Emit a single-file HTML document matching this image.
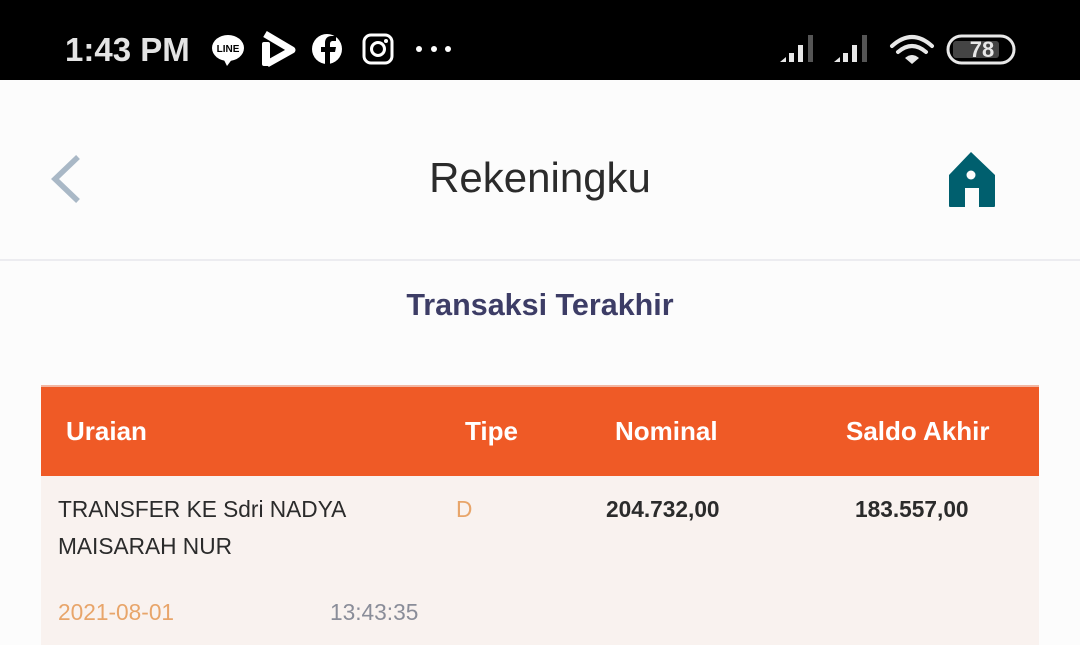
<!DOCTYPE html>
<html><head><meta charset="utf-8"><style>
*{margin:0;padding:0;box-sizing:border-box}
body{width:1080px;height:645px;overflow:hidden;background:#fcfcfc;font-family:"Liberation Sans",sans-serif;position:relative}
.a{position:absolute;white-space:nowrap}
</style></head><body>
<div class="a" style="left:0;top:0;width:1080px;height:80px;background:#000"></div>
<div class="a" style="left:65px;top:29px;color:#e4e4e4;font-size:33px;font-weight:bold;line-height:42px">1:43 PM</div>
<svg class="a" style="left:205px;top:28px" width="250" height="42" viewBox="0 0 250 42">
<ellipse cx="23" cy="20" rx="16" ry="13" fill="#fff"/><path d="M18 30 L22 38 L28 30Z" fill="#fff"/>
<text x="23" y="24" font-size="10" font-weight="bold" text-anchor="middle" font-family="Liberation Sans" fill="#000">LINE</text>
<path d="M60 6 L87 22 L62 36" fill="none" stroke="#fff" stroke-width="7" stroke-linejoin="round"/><rect x="57" y="14" width="8" height="24" rx="2" fill="#fff"/>
<circle cx="122" cy="21" r="15" fill="#fff"/><path d="M125 37 V24 h5 l1 -5 h-6 v-3 c0-2 1-3 3-3 h3 v-5 h-4 c-5 0-7 3-7 7 v4 h-4 v5 h4 v13z" fill="#000"/>
<rect x="159" y="7" width="28" height="28" rx="7" fill="none" stroke="#fff" stroke-width="3"/><circle cx="173" cy="21" r="6.5" fill="none" stroke="#fff" stroke-width="3"/><circle cx="181" cy="13" r="2" fill="#fff"/>
<circle cx="214" cy="21" r="3" fill="#fff"/><circle cx="229" cy="21" r="3" fill="#fff"/><circle cx="243" cy="21" r="3" fill="#fff"/>
</svg>
<svg class="a" style="left:778px;top:30px" width="245" height="40" viewBox="0 0 245 40">
<g fill="#e8e8e8"><path d="M2 32 L8 27 V32Z"/><rect x="11" y="23" width="5" height="9"/><rect x="20" y="15" width="5" height="17"/><rect x="30" y="5" width="5" height="27" fill="#555"/>
<path d="M56 32 L62 27 V32Z"/><rect x="65" y="23" width="5" height="9"/><rect x="74" y="15" width="5" height="17"/><rect x="84" y="5" width="5" height="27" fill="#555"/></g>
<g fill="none" stroke="#e8e8e8" stroke-width="4" stroke-linecap="round"><path d="M114 16 Q134 -2 154 16"/><path d="M120 22 Q134 10 148 22"/></g><path d="M127 28 Q134 22 141 28 L134 34Z" fill="#e8e8e8"/>
<rect x="170" y="6" width="66" height="27" rx="13.5" fill="none" stroke="#e8e8e8" stroke-width="3"/><rect x="175" y="11" width="46" height="17" rx="3" fill="#444"/>
<text x="204" y="27" font-size="22" font-weight="bold" text-anchor="middle" font-family="Liberation Sans" fill="#e8e8e8">78</text>
</svg>
<svg class="a" style="left:40px;top:150px" width="50" height="60"><path d="M38 7 L15 29 L38 51" fill="none" stroke="#a9b8c6" stroke-width="5.5"/></svg>
<div class="a" style="left:0;width:1080px;top:152px;text-align:center;font-size:42px;color:#2b2b2b;line-height:52px">Rekeningku</div>
<svg class="a" style="left:946px;top:150px" width="52" height="60" viewBox="0 0 52 60">
<path d="M25 2 L49 25 V56 Q49 57 48 57 H33 V38 H19 V57 H4 Q3 57 3 56 V25 Z" fill="#005f6e"/><circle cx="25" cy="25" r="4.5" fill="#fcfcfc"/></svg>
<div class="a" style="left:0;top:259px;width:1080px;height:2px;background:#ececf0"></div>
<div class="a" style="left:0;width:1080px;top:285px;text-align:center;font-size:30.5px;font-weight:bold;color:#3d3d66;line-height:40px">Transaksi Terakhir</div>
<div class="a" style="left:41px;top:385px;width:998px;height:2px;background:#f2b7a3"></div>
<div class="a" style="left:41px;top:387px;width:998px;height:89px;background:#ef5a26"></div>
<div class="a" style="left:41px;top:476px;width:998px;height:169px;background:#f9f2ef"></div>
<div class="a" style="left:66px;top:414px;font-size:26px;font-weight:bold;color:#fff;line-height:34px">Uraian</div>
<div class="a" style="left:465px;top:414px;font-size:26px;font-weight:bold;color:#fff;line-height:34px">Tipe</div>
<div class="a" style="left:615px;top:414px;font-size:26px;font-weight:bold;color:#fff;line-height:34px">Nominal</div>
<div class="a" style="left:846px;top:414px;font-size:26px;font-weight:bold;color:#fff;line-height:34px">Saldo Akhir</div>
<div class="a" style="left:58px;top:495px;font-size:22.7px;color:#2b2b2b;line-height:28px">TRANSFER KE Sdri NADYA</div>
<div class="a" style="left:58px;top:532px;font-size:22.7px;color:#2b2b2b;line-height:28px">MAISARAH NUR</div>
<div class="a" style="left:456px;top:495px;font-size:22.7px;color:#e8a56a;line-height:28px">D</div>
<div class="a" style="left:606px;top:495px;font-size:22.7px;font-weight:bold;color:#2b2b2b;line-height:28px">204.732,00</div>
<div class="a" style="left:855px;top:495px;font-size:22.7px;font-weight:bold;color:#2b2b2b;line-height:28px">183.557,00</div>
<div class="a" style="left:58px;top:598px;font-size:22.7px;color:#e8a56a;line-height:28px">2021-08-01</div>
<div class="a" style="left:330px;top:598px;font-size:22.7px;color:#8a8d99;line-height:28px">13:43:35</div>
</body></html>
